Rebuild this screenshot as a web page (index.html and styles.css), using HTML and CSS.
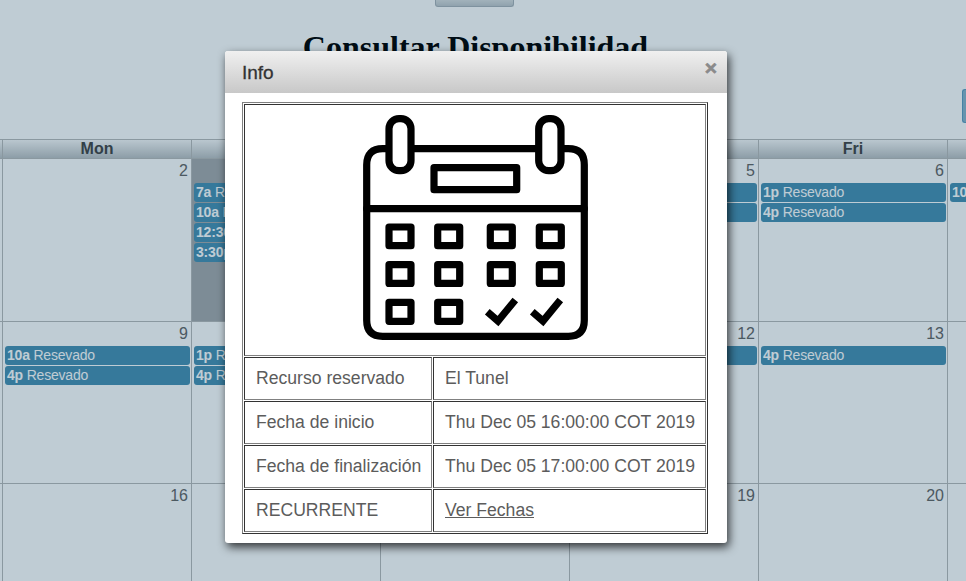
FILE: index.html
```html
<!DOCTYPE html>
<html lang="es">
<head>
<meta charset="utf-8">
<title>Consultar Disponibilidad</title>
<link rel="stylesheet" href="styles.css">
</head>
<body>
<div class="page">
  <div class="top-button"></div>
  <h1 class="title">Consultar Disponibilidad</h1>
  <div class="toolbar"><span class="view-button"></span></div>
  <div class="calendar">
    <div class="head">
      <div class="hc stub"></div>
      <div class="hc">Mon</div>
      <div class="hc">Tue</div>
      <div class="hc">Wed</div>
      <div class="hc">Thu</div>
      <div class="hc">Fri</div>
      <div class="hc">Sat</div>
    </div>
    <div class="week">
      <div class="day stub"></div>
      <div class="day"><div class="num">2</div></div>
      <div class="day today"><div class="num">3</div>
        <div class="ev"><b>7a</b> Resevado</div><div class="ev"><b>10a</b> Resevado</div><div class="ev"><b>12:30p</b> Resevado</div><div class="ev"><b>3:30p</b> Resevado</div></div>
      <div class="day"><div class="num">4</div></div>
      <div class="day"><div class="num">5</div><div class="ev"><b>1p</b> Resevado</div><div class="ev"><b>4p</b> Resevado</div></div>
      <div class="day"><div class="num">6</div><div class="ev"><b>1p</b> Resevado</div><div class="ev"><b>4p</b> Resevado</div></div>
      <div class="day"><div class="num">7</div><div class="ev"><b>10a</b> Resevado</div></div>
    </div>
    <div class="week">
      <div class="day stub"></div>
      <div class="day"><div class="num">9</div><div class="ev"><b>10a</b> Resevado</div><div class="ev"><b>4p</b> Resevado</div></div>
      <div class="day"><div class="num">10</div><div class="ev"><b>1p</b> Resevado</div><div class="ev"><b>4p</b> Resevado</div></div>
      <div class="day"><div class="num">11</div></div>
      <div class="day"><div class="num">12</div><div class="ev"><b>4p</b> Resevado</div></div>
      <div class="day"><div class="num">13</div><div class="ev"><b>4p</b> Resevado</div></div>
      <div class="day"><div class="num">14</div></div>
    </div>
    <div class="week">
      <div class="day stub"></div>
      <div class="day"><div class="num">16</div></div>
      <div class="day"><div class="num">17</div></div>
      <div class="day"><div class="num">18</div></div>
      <div class="day"><div class="num">19</div></div>
      <div class="day"><div class="num">20</div></div>
      <div class="day"><div class="num">21</div></div>
    </div>
  </div>
</div>
<div class="overlay"></div>
<div class="modal">
  <div class="modal-head"><span class="modal-title">Info</span><span class="close">×</span></div>
  <div class="modal-body">
    <table class="info">
      <colgroup><col class="col-label"><col class="col-value"></colgroup>
      <tr><td colspan="2" class="pic">
        <svg class="cal-icon" width="225" height="225" viewBox="0 0 225 225" fill="none" stroke="#000" stroke-width="7.200" stroke-linejoin="round" stroke-linecap="round">
          <path d="M26 33.700H19.700Q3.700 33.700 3.700 49.700V205.300Q3.700 221.300 19.700 221.300H205.300Q221.300 221.300 221.300 205.300V49.700Q221.300 33.700 205.300 33.700H198M48 33.700H175.700"/>
          <path d="M3.700 93.700H221.300"/>
          <rect x="26" y="3.700" width="22" height="52" rx="10" fill="#fff"/>
          <rect x="175.700" y="3.700" width="22.300" height="52" rx="10" fill="#fff"/>
          <rect x="71" y="52.700" width="82.700" height="22"/>
          <rect x="26" y="112" width="22" height="18.700"/><rect x="74.700" y="112" width="22" height="18.700"/><rect x="127.300" y="112" width="22" height="18.700"/><rect x="176.300" y="112" width="22" height="18.700"/>
          <rect x="26" y="149.700" width="22" height="18.700"/><rect x="74.700" y="149.700" width="22" height="18.700"/><rect x="127.300" y="149.700" width="22" height="18.700"/><rect x="176.300" y="149.700" width="22" height="18.700"/>
          <rect x="26" y="187.300" width="22" height="19"/><rect x="74.700" y="187.300" width="22" height="19"/>
          <path d="M124.300 196.700L135 206L152.300 185M169.300 196.700L180 206L197.300 185" stroke-linejoin="miter" stroke-linecap="butt"/>
        </svg>
      </td></tr>
      <tr><td>Recurso reservado</td><td>El Tunel</td></tr>
      <tr><td>Fecha de inicio</td><td>Thu Dec 05 16:00:00 COT 2019</td></tr>
      <tr><td>Fecha de finalización</td><td>Thu Dec 05 17:00:00 COT 2019</td></tr>
      <tr><td>RECURRENTE</td><td><a class="link" href="#">Ver Fechas</a></td></tr>
    </table>
  </div>
</div>
</body>
</html>
```
FILE: styles.css
```css
html, body { margin: 0; padding: 0; height: 100%; overflow: hidden; background: #fff; }
body { font-family: "Liberation Sans", Arial, sans-serif; color: #333; font-size: 14px; }
.page { height: 581px; overflow: hidden; position: relative; }
.top-button { width: 79px; height: 7px; margin-left: 435px; background: linear-gradient(#d8dcde, #c0c7cc); border: 1px solid #a9b2b8; border-top: 0; border-radius: 0 0 3px 3px; box-sizing: border-box; }
.title { margin: 22px 15px 0 0; text-align: center; font-family: "Liberation Serif", serif; font-size: 32px; line-height: 37px; font-weight: bold; color: #000; }
.toolbar { height: 34px; margin-top: 23px; display: flex; justify-content: flex-end; }
.view-button { width: 4px; height: 34px; background: #8ab4cc; border: 1px solid #5f9cc0; border-right: 0; border-radius: 3px 0 0 3px; box-sizing: border-box; }
.calendar { margin-top: 16px; border-top: 1px solid #b8baba; }
.head, .week { display: grid; grid-template-columns: 2px repeat(6, 189px); }
.hc { height: 18px; line-height: 18px; text-align: center; font-weight: bold; font-size: 16px; color: #444; background: linear-gradient(#f8f8f8, #bcc1c4); border-left: 1px solid #b8baba; border-bottom: 1px solid #b8baba; }
.hc.stub, .day.stub { border-left: 0; }
.week { height: 162px; }
.week + .week .day { border-top: 1px solid #b8baba; }
.day { border-left: 1px solid #b8baba; box-sizing: border-box; min-width: 0; overflow: hidden; padding: 0 1px 0 2px; }
.day.stub { padding: 0; }
.today { background: #a7aaac; }
.num { text-align: right; height: 24px; font-size: 16px; line-height: 24px; color: #666; padding-right: 2px; }
.ev { height: 19px; margin-bottom: 1px; line-height: 19px; padding-left: 2px; background: #4990b3; color: #fff; border-radius: 3px; font-size: 14px; letter-spacing: -0.2px; white-space: nowrap; overflow: hidden; }
.overlay { position: absolute; inset: 0; background: rgba(0, 51, 83, 0.25); }
.modal { position: absolute; left: 225px; top: 51px; width: 502px; height: 492px; background: #fff; border-radius: 3px; box-shadow: 2px 4px 10px rgba(0, 0, 0, 0.75); box-sizing: border-box; }
.modal-head { height: 42px; background: linear-gradient(#f0f0f0, #c8c8c8); border-radius: 3px 3px 0 0; display: flex; align-items: center; justify-content: space-between; padding: 2px 10px 0 17px; box-sizing: border-box; }
.modal-title { font-size: 19px; font-weight: normal; color: #333; -webkit-text-stroke: 0.3px #333; }
.close { font-size: 21px; font-weight: bold; color: #8a8a8a; align-self: flex-start; line-height: 30px; -webkit-text-stroke: 0.6px #8a8a8a; }
.modal-body { padding: 9px 0 0 17px; }
.info { width: 466px; border-collapse: separate; border-spacing: 1px; border: 1px solid; border-color: #808080 #333 #333 #808080; color: #5c5c5c; table-layout: fixed; }
.col-label { width: 188px; }
.col-value { width: 273px; }
.info td { border: 1px solid; border-color: #333 #808080 #808080 #333; height: 43px; box-sizing: border-box; padding: 0 11px; font-size: 17.600px; white-space: nowrap; }
.info td.pic { height: 252px; padding: 0; vertical-align: top; }
.cal-icon { display: block; margin: 10px 0 0 118px; }
.link { color: #5c5c5c; }
```
